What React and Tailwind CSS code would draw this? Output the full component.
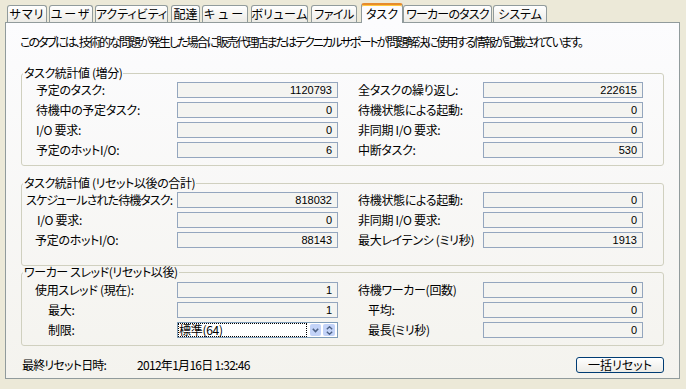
import React from "react";

const tabs = [
  { label: "サマリ", cls: "w-[40px] ml-0 tracking-[1px]" },
  { label: "ユーザ", cls: "w-[44px] ml-[2px] tracking-[2px]" },
  { label: "アクティビティ", cls: "w-[73px] ml-[2px] tracking-[0px]" },
  { label: "配達", cls: "w-[29px] ml-[3px] tracking-[0px]" },
  { label: "キュー", cls: "w-[46px] ml-[2px] tracking-[3px]" },
  { label: "ボリューム", cls: "w-[57px] ml-[3px] tracking-[0.5px]" },
  { label: "ファイル", cls: "w-[46px] ml-[3px] tracking-[-0.5px]" },
  { label: "タスク", cls: "w-[42px] ml-[4px] tracking-[0px]", active: true },
  { label: "ワーカーのタスク", cls: "w-[89px] ml-0 tracking-[-0.8px]" },
  { label: "システム", cls: "w-[54px] ml-[1px] tracking-[0px]" },
];

function Tab({ t }) {
  if (t.active) {
    return (
      <div
        className={`${t.cls} h-[20px] -mb-px relative z-10 bg-[#FCFCFE] border-x border-[#919B9C] border-t-2 border-t-[#E68B2C] shadow-[inset_0_1px_0_#FFC83C] rounded-t-[3px] flex items-center justify-center text-[12px] leading-[14px] whitespace-nowrap`}
      >
        {t.label}
      </div>
    );
  }
  return (
    <div
      className={`${t.cls} h-[17px] border border-b-0 border-[#919B9C] rounded-t-[3px] bg-linear-to-b from-white to-[#ECEBE6] flex items-center justify-center text-[12px] leading-[14px] whitespace-nowrap`}
    >
      {t.label}
    </div>
  );
}

function Field({ value, wide }) {
  return (
    <div
      className={`${wide ? "w-[161px]" : "w-[160px]"} h-[16px] border border-[#94A6BE] bg-[#F4F4F1] flex items-center justify-end pr-[5px] font-['Liberation_Sans',sans-serif] text-[11px] leading-[14px] tracking-normal`}
    >
      {value}
    </div>
  );
}

function Row({ l, lcls, lv, r, rcls, rv, combo }) {
  return (
    <div className="flex items-center h-[16px]">
      <div className={`w-[151px] whitespace-nowrap ${lcls}`}>{l}</div>
      {combo ? <Combo /> : <Field value={lv} wide />}
      <div className={`ml-[20px] w-[125px] whitespace-nowrap ${rcls}`}>{r}</div>
      <Field value={rv} />
    </div>
  );
}

function Combo() {
  return (
    <div className="w-[161px] h-[16px] border border-[#7F9DB9] bg-white flex items-center">
      <div className="w-[129px] h-[14px] border border-dotted border-black flex items-center leading-[12px] text-[12px] tracking-[-0.3px]">
        標準(64)
      </div>
      <div className="ml-[3px] w-[11px] h-[12px] rounded-[2px] bg-[#C3D3F8] flex items-center justify-center">
        <svg width="7" height="5" viewBox="0 0 7 5">
          <path d="M0.8 0.8 L3.5 3.6 L6.2 0.8" fill="none" stroke="#4D6185" strokeWidth="1.6" />
        </svg>
      </div>
      <div className="ml-[2px] w-[12px] h-[12px] rounded-[2px] bg-[#C3D3F8] flex flex-col items-center justify-center gap-[1px]">
        <svg width="7" height="4" viewBox="0 0 7 4">
          <path d="M0.8 3.3 L3.5 0.8 L6.2 3.3" fill="none" stroke="#4D6185" strokeWidth="1.4" />
        </svg>
        <svg width="7" height="4" viewBox="0 0 7 4">
          <path d="M0.8 0.7 L3.5 3.2 L6.2 0.7" fill="none" stroke="#4D6185" strokeWidth="1.4" />
        </svg>
      </div>
    </div>
  );
}

function Group({ title, cls, children }) {
  return (
    <fieldset className={`ml-[15px] w-[643px] border border-[#D0D0BF] rounded-[3px] ${cls}`}>
      <legend className="ml-[1px] px-[1px] text-[12px] leading-[12px] tracking-[-0.4px]">{title}</legend>
      <div className="ml-[4px] flex flex-col gap-[4px] tracking-[-0.3px]">{children}</div>
    </fieldset>
  );
}

export default function App() {
  return (
    <div className="w-[686px] h-[389px] bg-[#ECE9D8] text-black text-[12px] leading-[14px] font-['Noto_Sans_CJK_JP',sans-serif] [font-feature-settings:'palt'] overflow-hidden">
      <div className="flex items-end h-[22px] pl-[7px]">
        {tabs.map((t) => (
          <Tab key={t.label} t={t} />
        ))}
      </div>
      <div className="ml-[5px] w-[675px] h-[357px] border border-[#919B9C] bg-linear-to-b from-[#FCFCFE] to-[#F4F3EE]">
        <div className="mt-[12px] pl-[14px] text-[12px] leading-[14px] tracking-[-1.95px] whitespace-nowrap">
          このタブには、技術的な問題が発生した場合に販売代理店またはテクニカルサポートが問題解決に使用する情報が記載されています。
        </div>

        <Group title="タスク統計値 (増分)" cls="mt-[18px] pt-[3px] pb-[7px]">
          <Row l="予定のタスク:" lcls="pl-[10px]" lv="1120793" r="全タスクの繰り返し:" rcls="" rv="222615" />
          <Row l="待機中の予定タスク:" lcls="pl-[10px]" lv="0" r="待機状態による起動:" rcls="" rv="0" />
          <Row l="I/O 要求:" lcls="pl-[10px]" lv="0" r="非同期 I/O 要求:" rcls="" rv="0" />
          <Row l="予定のホットI/O:" lcls="pl-[10px]" lv="6" r="中断タスク:" rcls="" rv="530" />
        </Group>

        <Group title="タスク統計値 (リセット以後の合計)" cls="mt-[11px] pt-[3px] pb-[17px]">
          <Row l="スケジュールされた待機タスク:" lcls="tracking-[-0.9px]" lv="818032" r="待機状態による起動:" rcls="" rv="0" />
          <Row l="I/O 要求:" lcls="pl-[11px]" lv="0" r="非同期 I/O 要求:" rcls="" rv="0" />
          <Row l="予定のホットI/O:" lcls="pl-[9px]" lv="88143" r="最大レイテンシ (ミリ秒)" rcls="" rv="1913" />
        </Group>

        <Group title="ワーカー スレッド(リセット以後)" cls="mt-0 pt-[4px] pb-[7px]">
          <Row l="使用スレッド (現在):" lcls="pl-[9px]" lv="1" r="待機ワーカー(回数)" rcls="" rv="0" />
          <Row l="最大:" lcls="pl-[22px]" lv="1" r="平均:" rcls="pl-[10px]" rv="0" />
          <Row l="制限:" lcls="pl-[22px]" combo r="最長(ミリ秒)" rcls="pl-[10px]" rv="0" />
        </Group>

        <div className="mt-[11px] ml-[16px] w-[642px] h-[16px] flex items-center text-[12px] leading-[14px]">
          <div className="w-[115px] whitespace-nowrap tracking-[-0.8px]">最終リセット日時:</div>
          <div className="whitespace-nowrap tracking-[-0.7px]">2012年1月16日 1:32:46</div>
          <button className="ml-auto w-[88px] h-[16px] border border-[#003C74] rounded-[3px] bg-linear-to-b from-white to-[#ECEBE6] flex items-center justify-center text-[12px] leading-[12px]">
            一括リセット
          </button>
        </div>
      </div>
    </div>
  );
}
